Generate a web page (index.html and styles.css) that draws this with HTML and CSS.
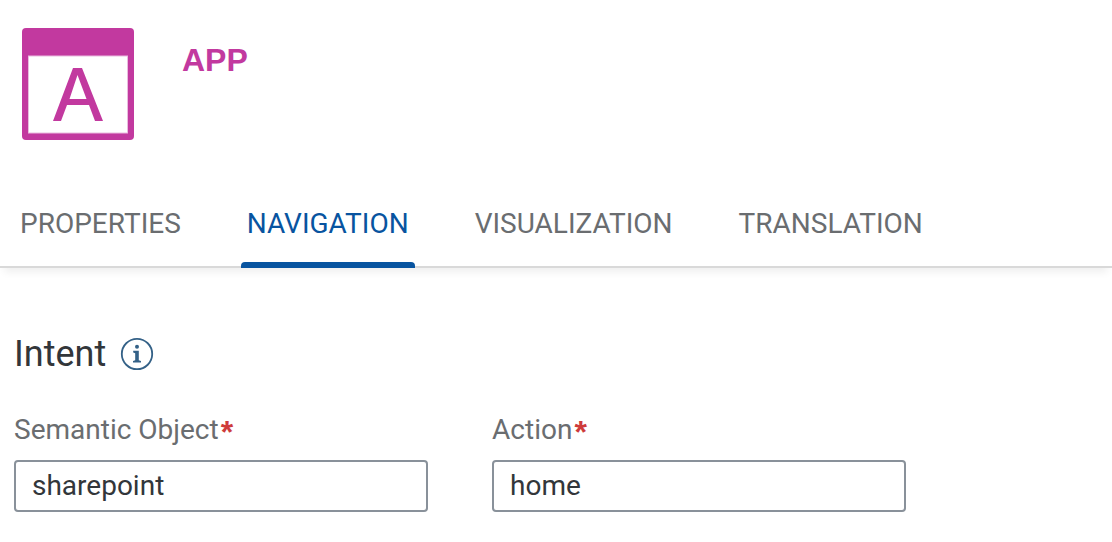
FILE: index.html
```html
<!DOCTYPE html>
<html lang="en">
<head>
<meta charset="utf-8">
<title>App configuration</title>
<link rel="stylesheet" href="styles.css">
</head>
<body>
<header class="app-header">
  <svg class="app-icon" viewBox="0 0 112 112" aria-hidden="true">
    <path d="M4 0h104q4 0 4 4v104q0 4-4 4H4q-4 0-4-4V4q0-4 4-4z" fill="#c2399f"/>
    <rect x="6.5" y="28" width="99" height="77" fill="#fff" stroke="#e9bcdf" stroke-width="1"/>
    <path d="M31 93 51 40h9l21 53h-8l-6-16H45l-6 16zM47.500 71h17L55.500 47z" fill="#c2399f" fill-rule="evenodd"/>
  </svg>
  <h1 class="app-title">APP</h1>
</header>
<nav class="tabs">
  <a class="tab" href="#properties">PROPERTIES</a>
  <a class="tab tab-active" href="#navigation" aria-current="page">NAVIGATION</a>
  <a class="tab" href="#visualization">VISUALIZATION</a>
  <a class="tab" href="#translation">TRANSLATION</a>
</nav>
<main class="content">
  <div class="section-head">
    <h2 class="section-title">Intent</h2>
    <button class="info" type="button" aria-label="Information">
      <svg class="info-icon" viewBox="0 0 34 34" aria-hidden="true">
        <circle cx="17" cy="17" r="15.200" fill="none" stroke="#346187" stroke-width="1.800"/>
        <circle cx="17" cy="9.800" r="2" fill="#346187"/>
        <path d="M13.200 13.800h5.600v9.400l2.200.7v1.600h-8v-1.600l2.200-.7v-7l-2-.7z" fill="#346187"/>
      </svg>
    </button>
  </div>
  <form class="fields">
    <div class="field">
      <label class="label" for="object">Semantic Object<span class="required">*</span></label>
      <input class="input" id="object" type="text" value="sharepoint" required>
    </div>
    <div class="field">
      <label class="label" for="action">Action<span class="required">*</span></label>
      <input class="input" id="action" type="text" value="home" required>
    </div>
  </form>
</main>
</body>
</html>
```
FILE: styles.css
```css
* { box-sizing: border-box; }
body { margin: 0; background: #fff; color: #32363a; font-family: Roboto, "Liberation Sans", sans-serif; }
.app-header { display: flex; align-items: flex-start; gap: 48px; padding: 28px 22px 40px; }
.app-icon { width: 112px; height: 112px; }
.app-title { margin: 12px 0 0; color: #c2399f; font: 700 32px/40px "Liberation Sans", Arial, sans-serif; }
.tabs { display: flex; gap: 54px; padding: 0 14px; height: 88px; border-bottom: 2px solid #d9d9d9; box-shadow: 0 8px 8px -4px #0001; }
.tab { display: flex; flex-direction: column; justify-content: space-between; height: 88px; padding: 28px 6px 0; color: #6a6d70; font-size: 28px; line-height: 32px; text-decoration: none; }
.tab-active { color: #0854a0; }
.tab-active::after { content: ""; height: 6px; margin: 0 -6px; border-radius: 4px 4px 0 0; background: #0854a0; }
.content { padding: 64px 14px 30px; }
.section-head { display: flex; align-items: center; gap: 14px; }
.section-title { margin: 0; font-size: 36px; line-height: 44px; font-weight: 400; }
.info { display: flex; padding: 0; border: 0; background: none; }
.info-icon { width: 34px; height: 34px; }
.fields { display: grid; grid-template-columns: repeat(2, minmax(0, 38.2%)); gap: 64px; padding-top: 36px; }
.field { min-width: 0; }
.label { display: block; height: 48px; color: #6a6d70; font-size: 28px; line-height: 36px; }
.required { margin-left: 2px; color: #ce3b3b; font: 700 32px/32px "Liberation Sans", Arial, sans-serif; vertical-align: -4px; }
.input { display: block; width: 100%; height: 52px; padding: 0 16px 2px; border: 2px solid #89919a; border-radius: 4px; background: #fff; color: #32363a; font: 28px/36px Roboto, "Liberation Sans", sans-serif; }
```
